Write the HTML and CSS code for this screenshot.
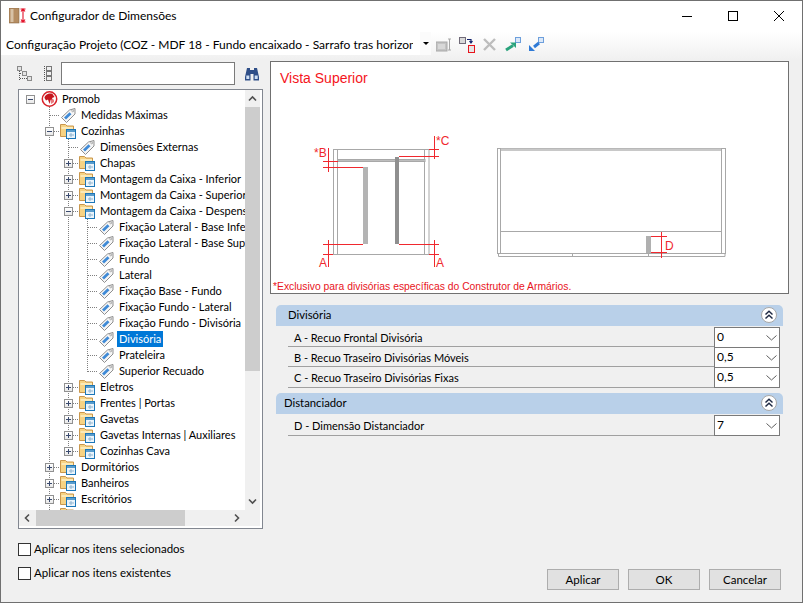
FILE: index.html
```html
<!DOCTYPE html>
<html lang="pt-BR">
<head>
<meta charset="utf-8">
<title>Configurador de Dimensões</title>
<link rel="stylesheet" href="styles.css">
</head>
<body>
<svg class="defs" width="0" height="0" aria-hidden="true">
  <symbol id="tag" viewBox="0 0 16 16">
    <path d="M1 10.500 9 3l5.500-1.500V7L6 15.500z" fill="#f6f6f6" stroke="#8f8f8f"/>
    <path d="M4.500 11.500 10 6.200" stroke="#3f8ad6" stroke-width="2.800"/>
    <circle cx="12.200" cy="3.800" r="1" fill="#fff" stroke="#8f8f8f" stroke-width=".7"/>
  </symbol>
  <symbol id="folder" viewBox="0 0 17 16">
    <path d="M.5 13.500v-12h5l1.500 1.500h6.500v10.500z" fill="#f7d384" stroke="#c9974d"/>
    <path d="M1.500 5h11.500" stroke="#fbeab8" stroke-width="2"/>
    <rect x="6.500" y="6.500" width="9" height="9" fill="#eaf4fb" stroke="#1b76b8"/>
    <path d="M7 8h8" stroke="#1b76b8" stroke-width="1.400"/>
    <path d="M11 10v4M9 12h5" stroke="#8fb3cf"/>
  </symbol>
  <symbol id="promob" viewBox="0 0 16 16">
    <circle cx="8" cy="8" r="7.200" fill="#fff" stroke="#d8222a" stroke-width="1.500"/>
    <path d="M3 7c0-3 5-5.500 8-4l2 3-2.500 1 1 2.500-2.500-.5-1 4-1.500-4.500-2 1z" fill="#c4161e"/>
    <path d="M9 8.500h3.500v2.500L9.500 13z" fill="#e87a7e"/>
  </symbol>
  <symbol id="chev" viewBox="0 0 11 6">
    <path d="M.5.500 5.500 5l5-4.500" fill="none" stroke="#5f5f5f"/>
  </symbol>
  <symbol id="collapse" viewBox="0 0 18 18">
    <circle cx="9" cy="9" r="7.500" fill="#fff" stroke="#a8a8a8" stroke-width="1"/>
    <path d="M5.500 8.500 9 5.200l3.500 3.300M5.500 12.500 9 9.200l3.500 3.300" fill="none" stroke="#1f2a44" stroke-width="1.500"/>
  </symbol>
</svg>

<div class="window">
  <header class="titlebar">
    <svg class="app-icon" width="18" height="16" viewBox="0 0 18 16">
      <rect x="0" y="0" width="10" height="15" fill="#b58d62" stroke="#8a6a46" stroke-width=".6"/>
      <rect x="1.500" y="1" width="3" height="13" fill="#d8c2a6"/>
      <path d="M11.500 1h5M14 1v13M11.500 14h5M12 3.500 14 1l2 2.500M12 11.500 14 14l2-2.500" fill="none" stroke="#e3132a" stroke-width="1.100"/>
    </svg>
    <span class="title">Configurador de Dimensões</span>
    <div class="caption">
      <span class="cap-btn"><svg width="10" height="10" viewBox="0 0 10 10"><path d="M0 5.500h10" stroke="#000"/></svg></span>
      <span class="cap-btn"><svg width="10" height="10" viewBox="0 0 10 10"><rect x=".5" y=".5" width="9" height="9" fill="none" stroke="#000"/></svg></span>
      <span class="cap-btn"><svg width="10" height="10" viewBox="0 0 10 10"><path d="M0 0l10 10M10 0 0 10" stroke="#000"/></svg></span>
    </div>
  </header>

  <div class="toolbar">
    <div class="cfg-combo"><span class="cfg-text">Configuração Projeto (COZ - MDF 18 - Fundo encaixado - Sarrafo tras horizontal)</span></div>
    <span class="cfg-arrow"></span>
    <div class="tb-icons">
      <svg width="16" height="16" viewBox="0 0 16 16"><rect x="0" y="5" width="11" height="9" fill="#c4c4c4" stroke="#a8a8a8"/><rect x="2" y="7" width="7" height="5" fill="#d8d8d8"/><path d="M12 2h3M13.500 2v11M12 13h3" stroke="#a8a8a8" fill="none"/></svg>
      <svg width="16" height="16" viewBox="0 0 16 16"><rect x=".5" y=".5" width="6" height="6" fill="#d8d8d8" stroke="#706a78"/><rect x="9.500" y="8.500" width="6" height="7" fill="#e6e6e6" stroke="#e8141c"/><path d="M8 2.500h4v3M10.500 4l1.500 2 1.500-2" fill="none" stroke="#14246e" stroke-width="1.200"/></svg>
      <svg width="16" height="16" viewBox="0 0 16 16"><path d="M2 2l11 11M13 2 2 13" stroke="#bdbdbd" stroke-width="2.400"/></svg>
      <svg width="16" height="16" viewBox="0 0 16 16"><rect x="10.500" y=".5" width="5" height="5" fill="#dbe8f8" stroke="#6d9fdc"/><path d="M1 13 8 8.500" stroke="#2aa37c" stroke-width="3"/><path d="M5 5.500h6v5.500z" fill="#2aa37c"/></svg>
      <svg width="16" height="16" viewBox="0 0 16 16"><rect x="10.500" y=".5" width="5" height="5" fill="#dbe8f8" stroke="#6d9fdc"/><path d="M6 10 11 6" stroke="#2f7ad6" stroke-width="3"/><path d="M1 14V8l6 6z" fill="#2f7ad6"/></svg>
    </div>
  </div>

  <main class="main">
    <section class="left">
      <div class="tree-tools">
        <svg class="tt-a" width="16" height="16" viewBox="0 0 16 16"><g fill="#e4e4e4" stroke="#8a8a8a"><rect x=".5" y=".5" width="4" height="4"/><rect x="5.500" y="5.500" width="4" height="4"/><rect x="10.500" y="10.500" width="4" height="4"/></g><path d="M2.500 5v10M3 7.500h2M3 12.500h7" stroke="#555" stroke-dasharray="1 1"/></svg>
        <svg class="tt-b" width="16" height="16" viewBox="0 0 16 16"><path d="M4.500 0v16" stroke="#555" stroke-dasharray="1 1"/><g fill="#efefef" stroke="#777"><rect x="6.500" y=".5" width="5" height="4"/><rect x="6.500" y="5.500" width="5" height="4"/><rect x="6.500" y="10.500" width="5" height="4"/></g></svg>
        <input class="search" type="text" aria-label="Buscar">
        <svg class="binoc" width="16" height="16" viewBox="0 0 16 16"><path d="M3 2h3v2h4V2h3l2 9v3.500H9.500V8h-3v6.500H1V11z" fill="#2f4f88"/><rect x="2.300" y="9.500" width="3" height="3.500" fill="#cfe0f5"/><rect x="10.700" y="9.500" width="3" height="3.500" fill="#cfe0f5"/></svg>
      </div>

      <div class="tree">
        <div class="tree-view">
          <div class="row"><span class="c"><i class="x minus"></i></span><svg class="ico"><use href="#promob"/></svg><span class="lbl">Promob</span></div>
          <div class="row"><span class="c"></span><span class="c t"></span><svg class="ico"><use href="#tag"/></svg><span class="lbl">Medidas Máximas</span></div>
          <div class="row"><span class="c"></span><span class="c t"><i class="x minus"></i></span><svg class="ico"><use href="#folder"/></svg><span class="lbl">Cozinhas</span></div>

          <div class="row"><span class="c"></span><span class="c v"></span><span class="c t"></span><svg class="ico"><use href="#tag"/></svg><span class="lbl">Dimensões Externas</span></div>
          <div class="row"><span class="c"></span><span class="c v"></span><span class="c t"><i class="x plus"></i></span><svg class="ico"><use href="#folder"/></svg><span class="lbl">Chapas</span></div>
          <div class="row"><span class="c"></span><span class="c v"></span><span class="c t"><i class="x plus"></i></span><svg class="ico"><use href="#folder"/></svg><span class="lbl">Montagem da Caixa - Inferior</span></div>
          <div class="row"><span class="c"></span><span class="c v"></span><span class="c t"><i class="x plus"></i></span><svg class="ico"><use href="#folder"/></svg><span class="lbl">Montagem da Caixa - Superior</span></div>
          <div class="row"><span class="c"></span><span class="c v"></span><span class="c t"><i class="x minus"></i></span><svg class="ico"><use href="#folder"/></svg><span class="lbl">Montagem da Caixa - Despensa</span></div>

          <div class="row"><span class="c"></span><span class="c v"></span><span class="c v"></span><span class="c t"></span><svg class="ico"><use href="#tag"/></svg><span class="lbl">Fixação Lateral - Base Inferior</span></div>
          <div class="row"><span class="c"></span><span class="c v"></span><span class="c v"></span><span class="c t"></span><svg class="ico"><use href="#tag"/></svg><span class="lbl">Fixação Lateral - Base Superior</span></div>
          <div class="row"><span class="c"></span><span class="c v"></span><span class="c v"></span><span class="c t"></span><svg class="ico"><use href="#tag"/></svg><span class="lbl">Fundo</span></div>
          <div class="row"><span class="c"></span><span class="c v"></span><span class="c v"></span><span class="c t"></span><svg class="ico"><use href="#tag"/></svg><span class="lbl">Lateral</span></div>
          <div class="row"><span class="c"></span><span class="c v"></span><span class="c v"></span><span class="c t"></span><svg class="ico"><use href="#tag"/></svg><span class="lbl">Fixação Base - Fundo</span></div>
          <div class="row"><span class="c"></span><span class="c v"></span><span class="c v"></span><span class="c t"></span><svg class="ico"><use href="#tag"/></svg><span class="lbl">Fixação Fundo - Lateral</span></div>
          <div class="row"><span class="c"></span><span class="c v"></span><span class="c v"></span><span class="c t"></span><svg class="ico"><use href="#tag"/></svg><span class="lbl">Fixação Fundo - Divisória</span></div>
          <div class="row"><span class="c"></span><span class="c v"></span><span class="c v"></span><span class="c t"></span><svg class="ico"><use href="#tag"/></svg><span class="lbl selected">Divisória</span></div>
          <div class="row"><span class="c"></span><span class="c v"></span><span class="c v"></span><span class="c t"></span><svg class="ico"><use href="#tag"/></svg><span class="lbl">Prateleira</span></div>
          <div class="row"><span class="c"></span><span class="c v"></span><span class="c v"></span><span class="c l"></span><svg class="ico"><use href="#tag"/></svg><span class="lbl">Superior Recuado</span></div>

          <div class="row"><span class="c"></span><span class="c v"></span><span class="c t"><i class="x plus"></i></span><svg class="ico"><use href="#folder"/></svg><span class="lbl">Eletros</span></div>
          <div class="row"><span class="c"></span><span class="c v"></span><span class="c t"><i class="x plus"></i></span><svg class="ico"><use href="#folder"/></svg><span class="lbl">Frentes | Portas</span></div>
          <div class="row"><span class="c"></span><span class="c v"></span><span class="c t"><i class="x plus"></i></span><svg class="ico"><use href="#folder"/></svg><span class="lbl">Gavetas</span></div>
          <div class="row"><span class="c"></span><span class="c v"></span><span class="c t"><i class="x plus"></i></span><svg class="ico"><use href="#folder"/></svg><span class="lbl">Gavetas Internas | Auxiliares</span></div>
          <div class="row"><span class="c"></span><span class="c v"></span><span class="c l"><i class="x plus"></i></span><svg class="ico"><use href="#folder"/></svg><span class="lbl">Cozinhas Cava</span></div>

          <div class="row"><span class="c"></span><span class="c t"><i class="x plus"></i></span><svg class="ico"><use href="#folder"/></svg><span class="lbl">Dormitórios</span></div>
          <div class="row"><span class="c"></span><span class="c t"><i class="x plus"></i></span><svg class="ico"><use href="#folder"/></svg><span class="lbl">Banheiros</span></div>
          <div class="row"><span class="c"></span><span class="c t"><i class="x plus"></i></span><svg class="ico"><use href="#folder"/></svg><span class="lbl">Escritórios</span></div>
          <div class="row"><span class="c"></span><span class="c t"><i class="x plus"></i></span><svg class="ico"><use href="#folder"/></svg></div>
        </div>
        <div class="vscroll">
          <svg class="arrow" width="15" height="17" viewBox="0 0 15 17"><path d="M4 10.500 7.500 7l3.500 3.500" fill="none" stroke="#505050" stroke-width="1.600"/></svg>
          <span class="vthumb"></span>
          <svg class="arrow end" width="15" height="17" viewBox="0 0 15 17"><path d="M4 6.500 7.500 10 11 6.500" fill="none" stroke="#505050" stroke-width="1.600"/></svg>
        </div>
        <div class="hscroll">
          <svg class="arrow" width="17" height="16" viewBox="0 0 17 16"><path d="M10 4.500 6.500 8l3.500 3.500" fill="none" stroke="#505050" stroke-width="1.600"/></svg>
          <span class="hthumb"></span>
          <svg class="arrow end" width="17" height="16" viewBox="0 0 17 16"><path d="M7 4.500 10.500 8 7 11.500" fill="none" stroke="#505050" stroke-width="1.600"/></svg>
        </div>
        <div class="corner"></div>
      </div>

      <div class="checks">
        <label class="check"><span class="box"></span>Aplicar nos itens selecionados</label>
        <label class="check"><span class="box"></span>Aplicar nos itens existentes</label>
      </div>
    </section>

    <section class="right">
      <div class="preview">
        <svg class="drawing" width="517" height="231" viewBox="271 62 517 231">
          <text class="d-title" x="280" y="83">Vista Superior</text>
          <g class="d-grey">
            <rect x="333.500" y="149.500" width="95.500" height="105"/>
            <path d="M337.500 150v104M424.500 150v104"/>
            <rect x="338" y="159.500" width="87" height="2" fill="#bdbdbd"/>
            <rect x="497.500" y="148.500" width="228" height="105"/>
            <path d="M500.500 149v104M721.500 149v104M501 231.500h220"/>
            <path d="M498.500 253.500v3h226.500v-3M572.500 254v2.500M648.500 254v2.500"/>
          </g>
          <rect x="363" y="167" width="5" height="77" fill="#b4b4b4"/>
          <rect x="395" y="157" width="4" height="87" fill="#8f8f8f"/>
          <rect x="501" y="148.500" width="220" height="2.500" fill="#c8c8c8"/>
          <rect x="646" y="236" width="5" height="17" fill="#b0b0b0"/>
          <g class="d-red">
            <path d="M328.500 148v24M323 161.500h15M323 167.500h40"/>
            <path d="M434.500 136v23M429 149.500h10M399 156.500h40"/>
            <path d="M328.500 240v27M323 244.500h40M323 254.500h10"/>
            <path d="M434.500 240v27M399 244.500h40M429 254.500h10"/>
            <path d="M651 236.500h16M651 252.500h16M661.500 232v26"/>
          </g>
          <g class="d-label">
            <text x="314" y="157">*B</text>
            <text x="436" y="145">*C</text>
            <text x="319" y="267">A</text>
            <text x="436" y="267">A</text>
            <text x="665" y="250">D</text>
          </g>
          <text class="d-note" x="273" y="290">*Exclusivo para divisórias específicas do Construtor de Armários.</text>
        </svg>
      </div>

      <div class="group">
        <div class="group-head"><span>Divisória</span><svg width="18" height="18"><use href="#collapse"/></svg></div>
        <div class="prop"><span class="prop-name">A - Recuo Frontal Divisória</span><span class="combo">0<svg width="11" height="6"><use href="#chev"/></svg></span></div>
        <div class="prop"><span class="prop-name">B - Recuo Traseiro Divisórias Móveis</span><span class="combo">0,5<svg width="11" height="6"><use href="#chev"/></svg></span></div>
        <div class="prop"><span class="prop-name">C - Recuo Traseiro Divisórias Fixas</span><span class="combo">0,5<svg width="11" height="6"><use href="#chev"/></svg></span></div>
      </div>
      <div class="group">
        <div class="group-head tight"><span>Distanciador</span><svg width="18" height="18"><use href="#collapse"/></svg></div>
        <div class="prop"><span class="prop-name">D - Dimensão Distanciador</span><span class="combo">7<svg width="11" height="6"><use href="#chev"/></svg></span></div>
      </div>

      <div class="actions">
        <button class="btn" type="button">Aplicar</button>
        <button class="btn" type="button">OK</button>
        <button class="btn" type="button">Cancelar</button>
      </div>
    </section>
  </main>
</div>
</body>
</html>
```
FILE: styles.css
```css
* { box-sizing: border-box; }
html, body { margin: 0; padding: 0; }
body {
  width: 803px;
  height: 603px;
  overflow: hidden;
  font-family: Lato, "Open Sans", "Liberation Sans", sans-serif;
  font-size: 12px;
  color: #000;
}
.defs { position: absolute; }
.window {
  width: 803px;
  height: 603px;
  border: 1px solid #707070;
  background: #f0f0f0;
  display: flex;
  flex-direction: column;
}

/* title bar */
.titlebar {
  height: 31px;
  background: #fff;
  display: flex;
  align-items: center;
  padding-left: 8px;
  flex: none;
}
.app-icon { margin-right: 3px; margin-top: -2px; }
.title { font-size: 12px; margin-top: -2px; }
.caption { margin-left: auto; display: flex; align-self: stretch; }
.cap-btn { width: 46px; display: flex; align-items: center; justify-content: center; margin-top: -2px; }

/* toolbar */
.toolbar {
  height: 28px;
  flex: none;
  display: flex;
  align-items: flex-start;
  background: linear-gradient(#ffffff, #f0f0f0);
}
.cfg-combo { width: 419px; height: 23px; background: #fff; padding-left: 5px; line-height: 25px; }
.cfg-text { display: block; width: 407px; overflow: hidden; white-space: nowrap; }
.cfg-arrow {
  width: 11px; height: 23px; background: #fbfbfb;
  display: flex; align-items: center; justify-content: center;
}
.cfg-arrow::after {
  content: ""; border: 3px solid transparent; border-top: 3px solid #000; border-bottom: 0;
}
.tb-icons { display: flex; gap: 7px; margin-left: 5px; margin-top: 5px; }

/* main */
.main { flex: 1; display: flex; min-height: 0; padding: 1px 13px 0 17px; gap: 7px; }
.left { width: 245px; flex: none; }
.right { flex: 1; display: flex; flex-direction: column; min-width: 0; }

.tree-tools { height: 23px; margin-top: 1px; display: flex; align-items: center; }
.tt-a { margin-left: -1px; }
.tt-b { margin-left: 7px; }
.search { width: 174px; height: 23px; margin: 0 0 0 5px; border: 1px solid #7a7a7a; background: #fff; padding: 0; outline: 0; }
.binoc { margin-left: 9px; }

.tree {
  margin-top: 4px;
  height: 440px;
  border: 1px solid #828790;
  background: #fff;
  padding: 0 2px 2px 0;
  display: grid;
  grid-template-columns: 226px 15px;
  grid-template-rows: 420px 16px;
}
.tree-view { overflow: hidden; padding: 1px 0 0 2px; font-size: 11px; }
.row { height: 16px; display: flex; white-space: nowrap; line-height: 16px; }
.c { width: 19px; height: 16px; flex: none; display: block; }

/* dotted tree guides: v = pass-through, t = tee, l = last child */
.v {
  background: linear-gradient(#808080 50%, transparent 50%) 9px 0 / 1px 2px repeat-y;
}
.t {
  background:
    linear-gradient(#808080 50%, transparent 50%) 9px 0 / 1px 2px repeat-y,
    repeating-linear-gradient(90deg, #808080 0 1px, transparent 1px 2px) 10px 8px / 9px 1px no-repeat;
}
.l {
  background:
    repeating-linear-gradient(#808080 0 1px, transparent 1px 2px) 9px 0 / 1px 9px no-repeat,
    repeating-linear-gradient(90deg, #808080 0 1px, transparent 1px 2px) 10px 8px / 9px 1px no-repeat;
}
.x {
  display: block; position: relative;
  width: 9px; height: 9px; margin: 4px 0 0 5px;
  border: 1px solid #919191;
  background: linear-gradient(#ffffff, #e8e8e8);
}
.x::before {
  content: ""; position: absolute; left: 1px; top: 3px; width: 5px; height: 1px; background: #3a4a6e;
}
.x.plus::after {
  content: ""; position: absolute; left: 3px; top: 1px; width: 1px; height: 5px; background: #3a4a6e;
}
.ico { width: 17px; height: 16px; flex: none; margin: 0 2px 0 1px; display: block; overflow: visible; }
.lbl { padding: 0 2px; height: 16px; display: block; }
.selected { background: #0078d7; color: #fff; }

.vscroll { background: #f0f0f0; display: flex; flex-direction: column; }
.vthumb { display: block; width: 15px; height: 264px; background: #cdcdcd; }
.arrow { flex: none; display: block; }
.arrow.end { margin-top: auto; }
.hscroll { background: #f0f0f0; display: flex; }
.arrow.end:last-child { margin-left: auto; }
.hscroll .arrow.end { margin-top: 0; }
.hthumb { display: block; width: 149px; height: 16px; background: #cdcdcd; }
.corner { background: #f0f0f0; }

.checks { margin-top: 12px; display: flex; flex-direction: column; gap: 8px; font-size: 11.5px; }
.check { height: 16px; display: flex; align-items: center; line-height: 16px; }
.box { width: 13px; height: 13px; border: 1px solid #333; background: #fff; margin-right: 3px; flex: none; }

/* preview */
.preview { width: 519px; height: 233px; border: 1px solid #707070; background: #fff; flex: none; }
.drawing { display: block; }
.d-title { font: 14px "Liberation Sans", sans-serif; fill: #f5151c; }
.d-grey { fill: none; stroke: #a8a8a8; stroke-width: 1; }
.d-red { fill: none; stroke: #f0282e; stroke-width: 1; }
.d-label text { font: 12px "Liberation Sans", sans-serif; fill: #f0282e; }
.d-note { font: 10.35px "Liberation Sans", sans-serif; fill: #e8141c; }

/* groups */
.group { margin: 5px 6px 0 6px; }
.preview + .group { margin-top: 11px; }
.group-head {
  height: 21px;
  background: #b9d0e9;
  border-radius: 5px 5px 0 0;
  display: flex;
  align-items: center;
  justify-content: space-between;
  padding: 0 5px 2px 12px;
  margin-bottom: 1px;
  font-size: 11.3px;
}
.group-head.tight { padding-left: 8px; }
.prop { height: 20px; margin: 0 3px 0 12px; display: flex; }
.prop:last-child { height: 21px; }
.prop-name { flex: 1; padding: 1px 0 0 6px; border-bottom: 1px solid #a0a0a0; line-height: 20px; font-size: 11px; }
.combo {
  width: 66px; height: 21px; flex: none;
  border: 1px solid #7a7a7a; background: #fff;
  padding-left: 2px; line-height: 17px;
  display: flex; align-items: flex-start; justify-content: space-between;
}
.combo svg { margin: 7px 2px 0 0; flex: none; }

.actions { margin-top: auto; margin-bottom: 12px; margin-right: 8px; display: flex; justify-content: flex-end; gap: 9px; }
.btn {
  width: 72px; height: 21px; padding: 0;
  border: 1px solid #adadad; background: #e1e1e1;
  font: inherit; font-size: 11.5px; color: #000;
}
```
